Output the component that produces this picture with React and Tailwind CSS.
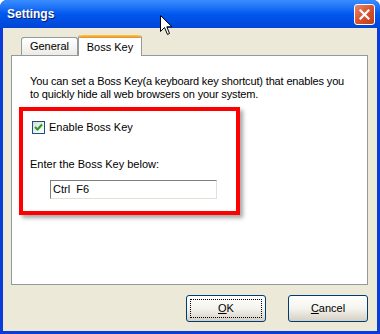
import React from 'react';

function Cursor() {
  return (
    <svg className="absolute left-[160px] top-[15px]" width="13" height="21" viewBox="0 0 13 21">
      <path d="M0.5 0.5 L0.5 16.5 L4.5 12.5 L7.5 19.5 L9.5 18.5 L6.8 11.8 L12 11.8 Z" fill="#fff" stroke="#000" strokeWidth="1" />
    </svg>
  );
}

function CloseButton() {
  return (
    <div className="w-[21px] h-[21px] rounded-[3px] border border-white bg-gradient-to-br from-[#E8876B] via-[#D9532F] to-[#C23B17] flex items-center justify-center">
      <svg width="11" height="11" viewBox="0 0 11 11">
        <path d="M1.5 1.5 L9.5 9.5 M9.5 1.5 L1.5 9.5" stroke="#fff" strokeWidth="2.2" strokeLinecap="square" />
      </svg>
    </div>
  );
}

function XpButton({ children, focused }) {
  return (
    <button className="w-[80px] h-[27px] rounded-[3px] border border-[#003C74] bg-gradient-to-b from-white via-[#F4F3EE] to-[#D6D0C5] p-[3px] text-[11px] text-black">
      <div className={`w-full h-full flex items-center justify-center ${focused ? 'border border-dotted border-black' : ''}`}>
        {children}
      </div>
    </button>
  );
}

export default function App() {
  return (
    <div className="relative w-[380px] h-[334px] flex flex-col rounded-t-[7px] bg-[#0A3CD9] overflow-hidden" style={{ fontFamily: '"Liberation Sans", Arial, sans-serif' }}>
      {/* title bar */}
      <div className="h-[28px] shrink-0 flex items-center justify-between pl-[7px] pr-[5px] bg-gradient-to-b from-[#3A8DFF] via-[#0058EE] to-[#0045D6]">
        <span className="text-white font-bold text-[12px] [text-shadow:1px_1px_0_#0A1E6A]">Settings</span>
        <CloseButton />
      </div>

      {/* body */}
      <div className="flex-1 mx-[3px] mb-[3px] bg-[#ECE9D8] pt-[7px] flex flex-col">
        <div className="flex items-end h-[20px] pl-[18px] relative z-10">
          <div className="w-[57px] h-[18px] border border-b-0 border-[#919B9C] rounded-t-[3px] bg-gradient-to-b from-white to-[#ECEBE6] text-[11px] flex items-center justify-center">
            General
          </div>
          <div className="w-[64px] h-[21px] -mb-px border-x border-[#919B9C] rounded-t-[3px] bg-white text-[11px] flex flex-col">
            <div className="h-[3px] rounded-t-[3px] bg-gradient-to-b from-[#FFC83C] to-[#E68B2C]" />
            <div className="flex-1 flex items-center justify-center">Boss Key</div>
          </div>
        </div>

        <div className="ml-[8px] w-[357px] h-[230px] border border-[#919B9C] bg-white pt-[19px] text-[11px] leading-[13px] text-black">
          <p className="pl-[18px] tracking-[-0.15px]">
            You can set a Boss Key(a keyboard key shortcut) that enables you<br />
            to quickly hide all web browsers on your system.
          </p>

          <div className="ml-[7px] mt-[6px] w-[221px] h-[108px] border-4 border-[#FF0000] shadow-[3px_3px_4px_rgba(0,0,0,0.35)] pt-[10px] pl-[9px]">
            <div className="flex items-center gap-[4px] h-[13px]">
              <div className="w-[13px] h-[13px] border border-[#1C5180] bg-gradient-to-br from-[#DCDCD7] to-white flex items-center justify-center">
                <svg width="9" height="9" viewBox="0 0 9 9">
                  <path d="M1 4 L3.5 6.5 L8 1.5" stroke="#21A121" strokeWidth="2" fill="none" />
                </svg>
              </div>
              <span>Enable Boss Key</span>
            </div>
            <div className="-ml-[2px] mt-[24px]">Enter the Boss Key below:</div>
            <div className="ml-[18px] mt-[9px] w-[167px] h-[19px] border border-t-[#7F7F7F] border-l-[#7F7F7F] border-r-[#E3E0D5] border-b-[#E3E0D5] bg-white flex items-center pl-[2px]">
              Ctrl&nbsp;&nbsp;F6
            </div>
          </div>
        </div>

        <div className="flex justify-end gap-[22px] mt-[10px] pr-[9px]">
          <XpButton focused><span><u>O</u>K</span></XpButton>
          <XpButton><span><u>C</u>ancel</span></XpButton>
        </div>
      </div>

      <Cursor />
    </div>
  );
}
